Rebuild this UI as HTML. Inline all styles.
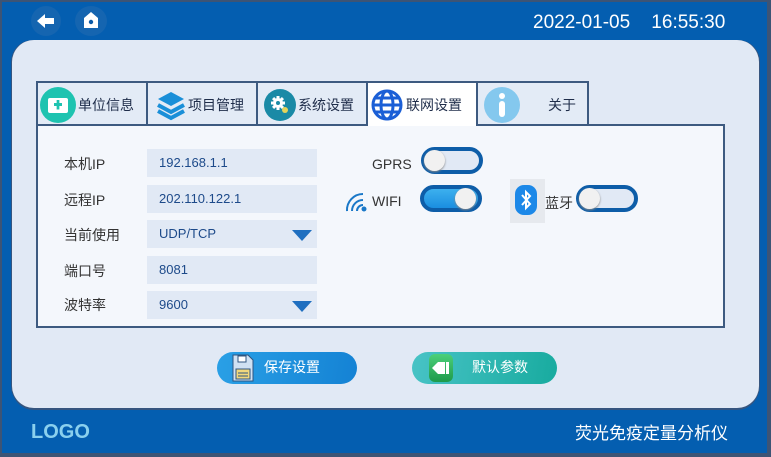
<!DOCTYPE html>
<html><head><meta charset="utf-8"><style>
*{margin:0;padding:0;box-sizing:border-box}
body{width:771px;height:457px;overflow:hidden;background:#3d5475;font-family:"Liberation Sans","Noto Sans CJK SC",sans-serif;position:relative}
.frame{position:absolute;left:2px;top:2px;width:765px;height:451px;background:#045eb0}
.abs{position:absolute}
.panel{position:absolute;left:12px;top:40px;width:747px;height:368px;background:#e1e9f5;border-radius:22px;box-shadow:0 2px 0 #36557f,-1px 0 0 #36557f,1px 0 0 #36557f}
.tab{position:absolute;top:81px;height:45px;border:2px solid #3d5a80;border-bottom:none;background:#e3ebf6;font-size:14px;color:#1f2d4a;display:flex;align-items:center}
.content{position:absolute;left:36px;top:124px;width:689px;height:204px;background:#f4f7fc;border:2px solid #3d5a80}
.lbl{position:absolute;left:64px;font-size:14px;color:#333}
.inp{position:absolute;left:147px;width:170px;height:28px;background:#e1e9f5;font-size:13px;color:#1d4a8a;padding-left:12px;line-height:28px}
.tri{position:absolute;right:5px;top:10px;width:0;height:0;border-left:10px solid transparent;border-right:10px solid transparent;border-top:11px solid #1f6fc0}
.sw{position:absolute;width:62px;height:27px;border-radius:14px;border:4px solid #0d5da8;background:#e1e9f5}
.sw .k{position:absolute;top:-1px;width:21px;height:21px;border-radius:50%;background:#f1f1f1;box-shadow:0 1px 2px #888}
</style></head><body>
<div class="frame"></div>
<div class="abs" style="left:31px;top:6px;width:30px;height:30px;border-radius:50%;background:#1565b0"></div>
<svg class="abs" style="left:36px;top:12px" width="20" height="18" viewBox="0 0 20 18"><path d="M1 9L9 2V6H18V12H9V16Z" fill="#fff"/></svg>
<div class="abs" style="left:75px;top:6px;width:32px;height:30px;border-radius:50%;background:#1565b0"></div>
<svg class="abs" style="left:83px;top:11px" width="16" height="18" viewBox="0 0 16 18"><path d="M8 1L15 7V17H1V7Z" fill="#fff"/><circle cx="8" cy="11" r="2.2" fill="#0a5aa8"/></svg>
<div class="abs" style="left:533px;top:12px;color:#fff;font-size:19px">2022-01-05&nbsp;&nbsp;&nbsp;&nbsp;16:55:30</div>
<div class="panel"></div>

<div class="tab" style="left:36px;width:112px">
<div style="width:36px;height:36px;border-radius:50%;background:#1ec3b0;margin-left:2px;position:relative"><div style="position:absolute;left:8px;top:11px;width:20px;height:15px;background:#fff;border-radius:2px"></div><div style="position:absolute;left:14px;top:13px;width:8px;height:10px;background:#1ec3b0;clip-path:polygon(33% 0,67% 0,67% 35%,100% 35%,100% 65%,67% 65%,67% 100%,33% 100%,33% 65%,0 65%,0 35%,33% 35%)"></div></div>
<span style="margin-left:2px">单位信息</span></div>
<div class="tab" style="left:146px;width:112px">
<svg width="34" height="34" viewBox="0 0 34 34" style="margin-left:6px"><path d="M17 4L30 11L17 18L4 11Z" fill="#1a8fd8"/><path d="M4 17L17 24L30 17" stroke="#1a8fd8" stroke-width="4" fill="none"/><path d="M4 23L17 30L30 23" stroke="#1a8fd8" stroke-width="4" fill="none"/></svg>
<span>项目管理</span></div>
<div class="tab" style="left:256px;width:112px">
<div style="width:32px;height:32px;border-radius:50%;background:#1a8aa6;margin-left:6px;position:relative"><svg class="abs" style="left:6px;top:6px" width="20" height="20" viewBox="0 0 20 20"><g fill="#fff"><circle cx="8" cy="8" r="5"/><rect x="6.5" y="1" width="3" height="14"/><rect x="1" y="6.5" width="14" height="3"/><rect x="6.5" y="1" width="3" height="14" transform="rotate(45 8 8)"/><rect x="6.5" y="1" width="3" height="14" transform="rotate(-45 8 8)"/></g><circle cx="8" cy="8" r="2" fill="#1a8aa6"/><circle cx="15" cy="15" r="3" fill="#e5d45a"/></svg></div>
<span style="margin-left:2px">系统设置</span></div>
<div class="tab" style="left:366px;width:112px;background:#fff">
<svg width="34" height="34" viewBox="0 0 34 34" style="margin-left:2px"><g fill="none" stroke="#1b5fd6" stroke-width="3"><circle cx="17" cy="17" r="14"/><ellipse cx="17" cy="17" rx="6" ry="14"/><path d="M3 17H31M6 10H28M6 24H28"/></g></svg>
<span style="margin-left:2px">联网设置</span></div>
<div class="tab" style="left:476px;width:113px">
<div style="width:36px;height:36px;border-radius:50%;background:#84c8ee;margin-left:6px;position:relative"><div style="position:absolute;left:15px;top:6px;width:6px;height:6px;border-radius:50%;background:#fff"></div><div style="position:absolute;left:15px;top:14px;width:6px;height:16px;border-radius:3px;background:#fff"></div></div>
<span style="margin-left:28px">关于</span></div>
<div class="content"></div>
<div class="abs" style="left:478px;top:124px;width:247px;height:2px;background:#3d5a80"></div>
<div class="abs" style="left:368px;top:124px;width:108px;height:2px;background:#fff"></div>

<div class="lbl" style="top:154px">本机IP</div><div class="inp" style="top:149px">192.168.1.1</div>
<div class="lbl" style="top:190px">远程IP</div><div class="inp" style="top:185px">202.110.122.1</div>
<div class="lbl" style="top:225px">当前使用</div><div class="inp" style="top:220px">UDP/TCP<div class="tri"></div></div>
<div class="lbl" style="top:261px">端口号</div><div class="inp" style="top:256px">8081</div>
<div class="lbl" style="top:295px">波特率</div><div class="inp" style="top:291px">9600<div class="tri"></div></div>

<div class="abs" style="left:372px;top:156px;font-size:14px;color:#333">GPRS</div>
<div class="sw" style="left:421px;top:147px"><div class="k" style="left:-1px"></div></div>
<svg class="abs" style="left:344px;top:190px" width="24" height="22" viewBox="0 0 24 22"><g fill="none" stroke="#1a78c8" stroke-width="2"><path d="M3 21A16 16 0 0 1 19 4"/><path d="M8 21A11 11 0 0 1 19 10"/><path d="M13 21A6 6 0 0 1 19 15"/></g><circle cx="20" cy="19" r="2.5" fill="#1a78c8"/></svg>
<div class="abs" style="left:372px;top:193px;font-size:14px;color:#333">WIFI</div>
<div class="sw" style="left:420px;top:185px;background:linear-gradient(#3db0ee,#1a8ee0)"><div class="k" style="left:31px"></div></div>
<div class="abs" style="left:510px;top:179px;width:35px;height:44px;background:#e6e9ee"></div>
<div class="abs" style="left:515px;top:185px;width:22px;height:30px;border-radius:9px;background:#1c88e8"></div>
<svg class="abs" style="left:519px;top:189px" width="14" height="22" viewBox="0 0 14 22"><path d="M3 6L11 15L7 19V3L11 7L3 16" fill="none" stroke="#fff" stroke-width="2"/></svg>
<div class="abs" style="left:545px;top:193px;font-size:14px;color:#333">蓝牙</div>
<div class="sw" style="left:576px;top:185px"><div class="k" style="left:-1px"></div></div>

<div class="abs" style="left:217px;top:352px;width:140px;height:32px;border-radius:16px;background:linear-gradient(100deg,#2aa0e6,#1482d4);color:#fff;font-size:14px;line-height:30px;padding-left:47px">保存设置</div>
<svg class="abs" style="left:232px;top:354px" width="22" height="28" viewBox="0 0 22 28"><path d="M1 1H16L21 6V27H1Z" fill="#cfe1f3" stroke="#2f5580"/><rect x="6" y="2" width="8" height="6" fill="#fff" stroke="#2f5580"/><rect x="4" y="15" width="14" height="10" fill="#f1d77c" stroke="#2f5580"/><path d="M6 19H16M6 22H16" stroke="#2f5580"/></svg>
<div class="abs" style="left:412px;top:352px;width:145px;height:32px;border-radius:16px;background:linear-gradient(100deg,#48c3c6,#18ab9f);color:#fff;font-size:14px;line-height:30px;padding-left:60px">默认参数</div>
<div class="abs" style="left:429px;top:354px;width:24px;height:28px;border-radius:6px;background:linear-gradient(#4cd07a,#1e9a4a)"></div>
<svg class="abs" style="left:432px;top:361px" width="18" height="14" viewBox="0 0 18 14"><path d="M0 7L6 1H13V13H6Z" fill="#fff"/><rect x="14" y="1" width="3" height="12" fill="#fff"/></svg>

<div class="abs" style="left:31px;top:421px;color:#8ad0ee;font-size:20px;font-weight:bold">LOGO</div>
<div class="abs" style="left:575px;top:419px;color:#fff;font-size:17px">荧光免疫定量分析仪</div>
</body></html>
